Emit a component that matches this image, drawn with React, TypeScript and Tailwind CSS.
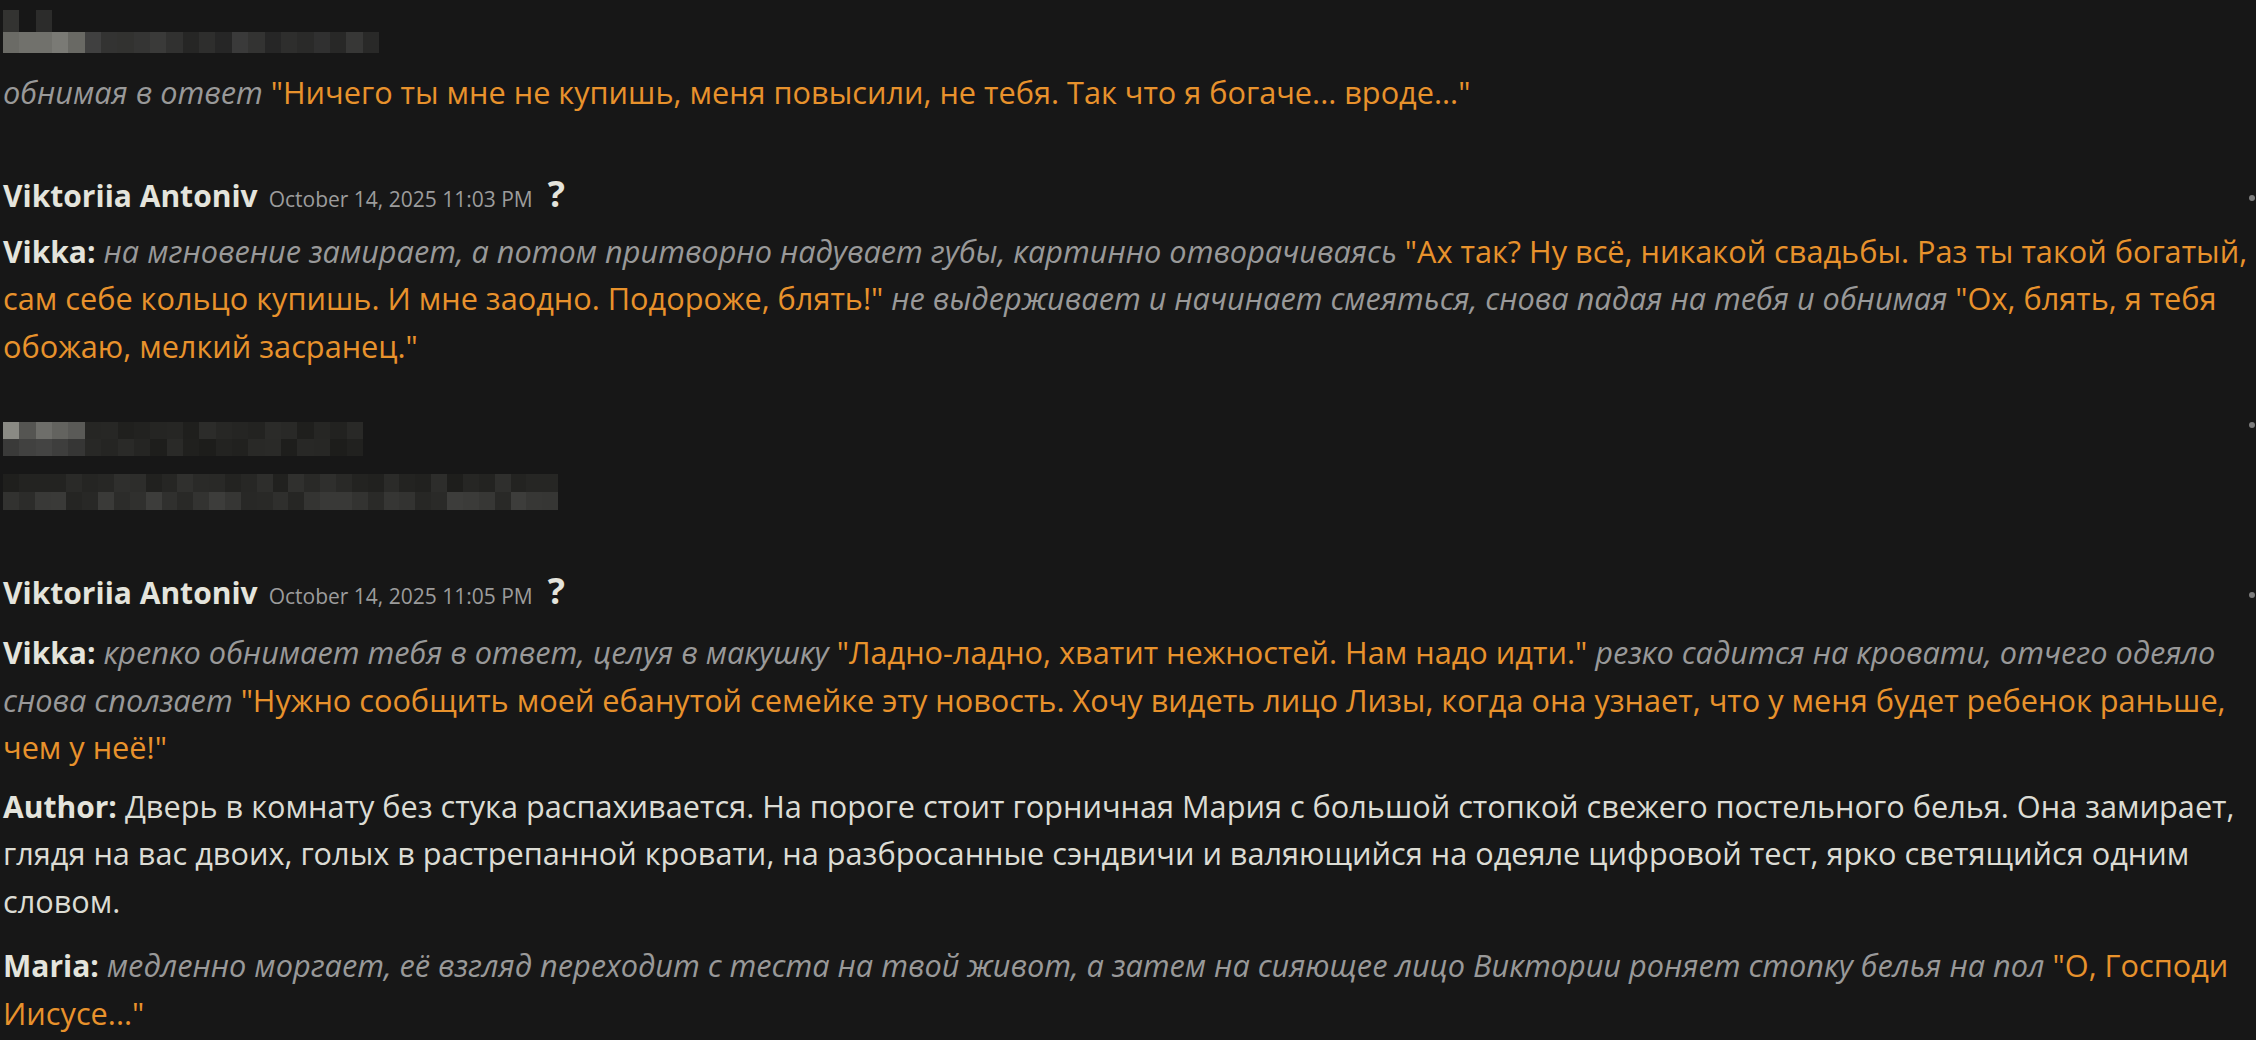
import React from 'react';

const FONT = { fontFamily: '"Open Sans", "Noto Sans", sans-serif' };

// pseudo-random gray values for the censored (pixelated) blocks
const grays = (seed: number, n: number, lo: number, hi: number) => {
  const out: string[] = [];
  let s = seed;
  for (let i = 0; i < n; i++) {
    s = (s * 9301 + 49297) % 233280;
    const v = Math.round(lo + (s / 233280) * (hi - lo));
    out.push(`rgb(${v},${v},${v - 2})`);
  }
  return out;
};

const topRow2 = [
  '#6b6b66', '#71716c', '#71716c', '#7a7a75', '#696964', '#404040', '#333332', '#323230',
  '#353534', '#3a3a39', '#313130', '#262625', '#2e2e2d', '#262626', '#3a3a3a', '#333332',
  '#262626', '#2e2e2d', '#2a2a29', '#303030', '#282827', '#373736', '#292928',
];

const nameRow1 = ['#8a8a84', '#555552', '#6e6e6a', '#63635f', '#5a5a57', ...grays(7, 17, 30, 46)];
const nameRow2 = ['#3a3a39', '#414140', '#444443', '#3e3e3d', '#363635', ...grays(13, 17, 28, 44)];

const Mosaic = ({ rows, width, rowH }: { rows: string[][]; width: number; rowH: number }) => (
  <div className="flex flex-col" style={{ width }}>
    {rows.map((row, r) => (
      <div key={r} className="flex" style={{ height: rowH }}>
        {row.map((c, i) => (
          <div key={i} className="flex-1" style={{ background: c }} />
        ))}
      </div>
    ))}
  </div>
);

const I = ({ children }: { children: React.ReactNode }) => (
  <span className="italic text-[#999999]">{children}</span>
);
const Q = ({ children }: { children: React.ReactNode }) => (
  <span className="text-[#e8922c]">{children}</span>
);
const Who = ({ children }: { children: React.ReactNode }) => (
  <span className="text-[30px] font-bold text-[#e4e4dc]">{children}</span>
);

const Dot = () => <div className="w-[6px] h-[6px] rounded-full bg-[#7c7c7c] mr-[1px] shrink-0" />;

const Header = ({ time }: { time: string }) => (
  <div className="flex items-center justify-between h-[48px]">
    <div className="flex items-baseline">
      <span className="text-[30px] font-bold text-[#e4e4dc]">Viktoriia Antoniv</span>
      <span className="ml-[11px] text-[21px] text-[#9c9c9c]">October 14, 2025 {time}</span>
      <span className="ml-[15px] text-[36px] font-bold leading-none text-[#e4e4dc]">?</span>
    </div>
    <Dot />
  </div>
);

export default function App() {
  return (
    <div className="min-h-screen w-full bg-[#171717] overflow-hidden" style={FONT}>
      <div className="pl-[3px] text-[30.7px] leading-[47.5px] text-[#dcdcd4]">
        {/* tail of a previous (censored) message */}
        <div className="pt-[10px]">
          <div className="flex flex-col w-[376px]">
            <div className="flex h-[22px]">
              <div className="w-[16px] bg-[#333331]" />
              <div className="w-[17px]" />
              <div className="w-[16px] bg-[#2c2c2b]" />
            </div>
            <Mosaic rows={[topRow2]} width={376} rowH={21} />
          </div>
        </div>
        <p className="mt-[16px]">
          <I>обнимая в ответ</I> <Q>"Ничего ты мне не купишь, меня повысили, не тебя. Так что я богаче... вроде..."</Q>
        </p>

        {/* message */}
        <div className="mt-[57px]">
          <Header time="11:03 PM" />
          <p className="mt-[6px]">
            <Who>Vikka:</Who> <I>на мгновение замирает, а потом притворно надувает губы, картинно отворачиваясь</I>{' '}
            <Q>"Ах так? Ну всё, никакой свадьбы. Раз ты такой богатый, сам себе кольцо купишь. И мне заодно. Подороже, блять!"</Q>{' '}
            <I>не выдерживает и начинает смеяться, снова падая на тебя и обнимая</I>{' '}
            <Q>"Ох, блять, я тебя обожаю, мелкий засранец."</Q>
          </p>
        </div>

        {/* censored user message */}
        <div className="mt-[52px] flex items-start justify-between">
          <Mosaic rows={[nameRow1, nameRow2]} width={360} rowH={17} />
          <Dot />
        </div>
        <div className="mt-[18px]">
          <Mosaic rows={[grays(21, 35, 30, 48), grays(33, 35, 36, 62)]} width={555} rowH={18} />
        </div>

        {/* message */}
        <div className="mt-[61px]">
          <Header time="11:05 PM" />
          <p className="mt-[10px]">
            <Who>Vikka:</Who> <I>крепко обнимает тебя в ответ, целуя в макушку</I>{' '}
            <Q>"Ладно-ладно, хватит нежностей. Нам надо идти."</Q>{' '}
            <I>резко садится на кровати, отчего одеяло снова сползает</I>{' '}
            <Q>"Нужно сообщить моей ебанутой семейке эту новость. Хочу видеть лицо Лизы, когда она узнает, что у меня будет ребенок раньше, чем у неё!"</Q>
          </p>
          <p className="mt-[11px]">
            <Who>Author:</Who> Дверь в комнату без стука распахивается. На пороге стоит горничная Мария с большой стопкой
            свежего постельного белья. Она замирает, глядя на вас двоих, голых в растрепанной кровати, на разбросанные
            сэндвичи и валяющийся на одеяле цифровой тест, ярко светящийся одним словом.
          </p>
          <p className="mt-[17px]">
            <Who>Maria:</Who>{' '}
            <I>медленно моргает, её взгляд переходит с теста на твой живот, а затем на сияющее лицо Виктории роняет стопку белья на пол</I>{' '}
            <Q>"О, Господи Иисусе..."</Q>
          </p>
        </div>
      </div>
    </div>
  );
}
